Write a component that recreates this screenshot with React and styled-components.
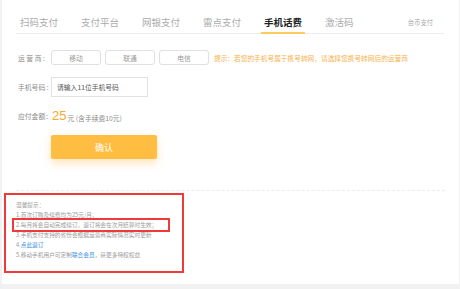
import * as React from "react";
import styled, { createGlobalStyle } from "styled-components";

const tabs = [
  { id: 1, label: "扫码支付" },
  { id: 2, label: "支付平台" },
  { id: 3, label: "网银支付" },
  { id: 4, label: "雷点支付" },
  { id: 5, label: "手机话费", active: true },
  { id: 6, label: "激活码" },
];

const carriers = ["移动", "联通", "电信"];

const GlobalStyle = createGlobalStyle`
  html, body {
    margin: 0;
    padding: 0;
    background: #f1f1f1;
  }
  body {
    font-family: "Noto Sans CJK SC", "Noto Sans", sans-serif;
  }
`;

export default function App() {
  return (
    <>
      <GlobalStyle />
      <Panel>
        <TabBar>
          {tabs.map((tab) => (
            <Tab key={tab.id} $active={tab.active}>
              {tab.label}
            </Tab>
          ))}
          <SideTab>台币支付</SideTab>
        </TabBar>

        <Row $top={16}>
          <Label>运 营 商 :</Label>
          <CarrierGroup>
            {carriers.map((c) => (
              <CarrierButton key={c}>{c}</CarrierButton>
            ))}
          </CarrierGroup>
          <Hint>提示：若您的手机号属于携号转网，请选择您携号转网后的运营商</Hint>
        </Row>

        <Row $top={12}>
          <Label>手机号码 :</Label>
          <PhoneInput>请输入11位手机号码</PhoneInput>
        </Row>

        <Row $top={11}>
          <Label>应付金额：</Label>
          <Amount>25</Amount>
          <AmountNote>元 (含手续费10元)</AmountNote>
        </Row>

        <ConfirmButton>确认</ConfirmButton>

        <Divider />

        <TipsBox>
          <TipLine>温馨提示：</TipLine>
          <TipLine>1.首次订购及续费均为25元/月；</TipLine>
          <MarkedLine>2.每月将会自动完成续订，退订将会在次月结算时生效；</MarkedLine>
          <TipLine>3.手机支付支持的省份会根据运营商实际情况实时更新</TipLine>
          <TipLine>
            4.<Link>点此退订</Link>
          </TipLine>
          <TipLine>
            5.移动手机用户可定制<Link>联合会员</Link>，获更多特权权益
          </TipLine>
        </TipsBox>
      </Panel>
    </>
  );
}

const Panel = styled.main`
  box-sizing: border-box;
  width: 457px;
  height: 284px;
  margin-left: 2px;
  padding: 0 15px 0 14px;
  background: #fff;
  display: flex;
  flex-direction: column;
`;

const TabBar = styled.nav`
  display: flex;
  align-items: flex-end;
  gap: 17px;
  height: 33px;
  border-bottom: 1px solid #ececec;
  padding-right: 11px;
`;

const Tab = styled.div`
  padding: 0 3px 5px;
  margin-bottom: -1px;
  border-bottom: 2px solid ${(p) => (p.$active ? "#ffcb5c" : "transparent")};
  font-size: 9.5px;
  line-height: 10px;
  font-weight: ${(p) => (p.$active ? 700 : 400)};
  color: ${(p) => (p.$active ? "#222" : "#ababab")};
  &:first-child {
    margin-left: 1px;
  }
`;

const SideTab = styled.div`
  margin-left: auto;
  padding-bottom: 7px;
  font-size: 6.3px;
  line-height: 6.5px;
  color: #a9a9a9;
`;

const Row = styled.div`
  display: flex;
  align-items: center;
  margin-top: ${(p) => p.$top}px;
  padding-left: 2px;
`;

const Label = styled.span`
  width: 33px;
  flex-shrink: 0;
  font-size: 6.8px;
  color: #8a8a8a;
  white-space: nowrap;
`;

const CarrierGroup = styled.div`
  display: flex;
  gap: 4px;
`;

const CarrierButton = styled.button`
  box-sizing: border-box;
  width: 50px;
  height: 15px;
  padding: 0;
  border: 1px solid #e0e0e0;
  border-radius: 3px;
  background: #fff;
  font-family: inherit;
  font-size: 6.8px;
  color: #9a9a9a;
`;

const Hint = styled.span`
  margin-left: 5px;
  font-size: 6.7px;
  color: #f7b04a;
  white-space: nowrap;
`;

const PhoneInput = styled.div`
  box-sizing: border-box;
  width: 97px;
  height: 20px;
  display: flex;
  align-items: center;
  padding-left: 5px;
  border: 1px solid #e2e2e2;
  font-size: 6.8px;
  color: #555;
`;

const Amount = styled.span`
  margin-left: 1px;
  font-family: "Liberation Sans", sans-serif;
  font-size: 13px;
  line-height: 16px;
  color: #f7a928;
`;

const AmountNote = styled.span`
  margin-left: 1px;
  padding-top: 3px;
  font-size: 6.8px;
  color: #8a8a8a;
`;

const ConfirmButton = styled.button`
  width: 106px;
  height: 24px;
  margin: 11px 0 0 35px;
  padding: 0;
  border: none;
  border-radius: 2px;
  background: #ffbe42;
  box-shadow: 0 4px 8px rgba(255, 176, 60, 0.35);
  font-family: inherit;
  font-size: 9px;
  color: #fff;
`;

const Divider = styled.hr`
  width: 429px;
  margin: 31px 0 0 0;
  border: none;
  border-top: 1px dashed #ececec;
`;

const TipsBox = styled.section`
  box-sizing: border-box;
  width: 180px;
  margin: 2px 0 0 -12px;
  padding: 5px 0 11px 10px;
  border: 2px solid #f03a3a;
`;

const TipLine = styled.div`
  font-size: 5.7px;
  line-height: 10px;
  color: #9a9a9a;
  white-space: nowrap;
`;

const MarkedLine = styled(TipLine)`
  box-sizing: border-box;
  width: 154px;
  margin-left: -2px;
  padding-left: 2px;
  outline: 2px solid #f03a3a;
`;

const Link = styled.span`
  color: #3d8fe0;
`;
